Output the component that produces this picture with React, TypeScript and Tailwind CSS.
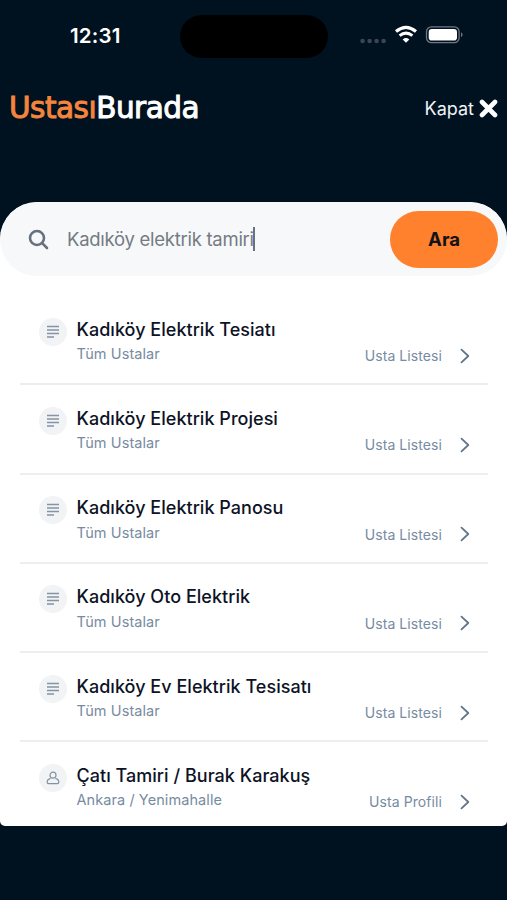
type Result = {
  title: string;
  subtitle: string;
  label: string;
  kind: "list" | "profile";
};

const results: Result[] = [
  { title: "Kadıköy Elektrik Tesiatı", subtitle: "Tüm Ustalar", label: "Usta Listesi", kind: "list" },
  { title: "Kadıköy Elektrik Projesi", subtitle: "Tüm Ustalar", label: "Usta Listesi", kind: "list" },
  { title: "Kadıköy Elektrik Panosu", subtitle: "Tüm Ustalar", label: "Usta Listesi", kind: "list" },
  { title: "Kadıköy Oto Elektrik", subtitle: "Tüm Ustalar", label: "Usta Listesi", kind: "list" },
  { title: "Kadıköy Ev Elektrik Tesisatı", subtitle: "Tüm Ustalar", label: "Usta Listesi", kind: "list" },
  { title: "Çatı Tamiri / Burak Karakuş", subtitle: "Ankara / Yenimahalle", label: "Usta Profili", kind: "profile" },
];

export default function App() {
  return (
    <div className="flex h-[900px] w-[507px] flex-col overflow-hidden bg-[#001120] font-['Inter',sans-serif]">
      <StatusBar />
      <Header />
      <main className="mt-[67px] flex h-[624px] flex-col overflow-hidden rounded-t-[37px] rounded-b-[5px] bg-white">
        <SearchBar />
        <ul className="mt-5 pr-[19px] pl-5">
          {results.map((result) => (
            <ResultRow key={result.title} result={result} />
          ))}
        </ul>
      </main>
    </div>
  );
}

function StatusBar() {
  return (
    <div className="flex h-[72px] shrink-0 items-center">
      <span className="ml-[70px] w-[110px] text-[20.5px] font-semibold tracking-[0.2px] text-white">12:31</span>
      <div className="h-[43px] w-[148px] rounded-full bg-black" />
      <svg className="ml-8" width="104" height="24" viewBox="360 24 104 24" fill="none">
        <g fill="#3c4652">
          <circle cx="362.6" cy="41" r="2.3" />
          <circle cx="369.6" cy="41" r="2.3" />
          <circle cx="376.6" cy="41" r="2.3" />
          <circle cx="383.6" cy="41" r="2.3" />
        </g>
        {/* Wifi */}
        <path d="M396 31.4Q406 23.2 416 31.4" stroke="#fff" strokeWidth="3.2" />
        <path d="M399.6 35.7Q406 30.5 412.4 35.7" stroke="#fff" strokeWidth="3" />
        <path d="M402.7 39.4Q406 36.6 409.3 39.4L406 42.8Z" fill="#fff" />
        {/* Battery */}
        <rect x="426.5" y="26.9" width="32.6" height="15.8" rx="4.8" stroke="#6f7882" strokeWidth="1.3" />
        <rect x="428.7" y="29" width="28.3" height="11.6" rx="3.1" fill="#fff" />
        <path d="M461 32.2q3.2 2.5 0 5Z" fill="#6f7882" />
      </svg>
    </div>
  );
}

function Header() {
  return (
    <header className="flex h-[63px] shrink-0 items-center justify-between pt-[9px] pr-[9px] pl-[9px]">
      <div className="mt-0.5 font-['DejaVu_Sans',sans-serif] text-[29.5px] leading-none tracking-[-0.5px] text-white [-webkit-text-stroke:1px]">
        <span className="text-[#f5843c]">Ustası</span>Burada
      </div>
      <button className="flex items-center gap-[5px] text-lg text-[#f1f3f5]">
        <span className="mt-0.5">Kapat</span>
        <svg width="19" height="19" viewBox="0 0 19 19" stroke="#fff" strokeWidth="4.6" strokeLinecap="round">
          <path d="M3 3l13 13M16 3L3 16" />
        </svg>
      </button>
    </header>
  );
}

function SearchBar() {
  return (
    <div className="flex h-[74px] shrink-0 items-center rounded-full bg-[#f6f8fa] pr-[9px] pl-7">
      <svg className="mt-0.5" width="22" height="22" viewBox="0 0 22 22" fill="none" stroke="#66717d" strokeWidth="2.6" strokeLinecap="round">
        <circle cx="9" cy="9" r="7" />
        <path d="M14.2 14.2L19 19" />
      </svg>
      <span className="mt-0.5 ml-[17px] text-[18.5px] tracking-[-0.27px] whitespace-nowrap text-[#757b82]">Kadıköy elektrik tamiri</span>
      <span className="-ml-px h-6 w-0.5 bg-[#68727e]" />
      <button className="ml-auto h-[57px] w-[108px] rounded-full bg-[#ff802d] pt-0.5 text-[18.5px] font-bold text-[#101318]">Ara</button>
    </div>
  );
}

function ResultRow({ result }: { result: Result }) {
  return (
    <li className="flex h-[89.25px] border-b-2 border-[#eceef0] pt-[21.5px] pl-[19px] last:border-b-0">
      <div className="flex size-7 items-center justify-center rounded-full bg-[#f1f3f5]">
        {result.kind === "list" ? <LinesIcon /> : <PersonIcon />}
      </div>
      <div className="ml-[9.5px] whitespace-nowrap">
        <div className="text-lg leading-6 font-medium tracking-[0.03px] text-[#0d1326]">{result.title}</div>
        <div className="mt-[0.5px] text-[14.5px] leading-6 tracking-[0.08px] text-[#778ba2]">{result.subtitle}</div>
      </div>
      <div className="mt-[26px] mr-[18px] ml-auto flex h-6 items-center gap-[18px] text-[14px] tracking-[0.08px] whitespace-nowrap text-[#778ba2]">
        {result.label}
        <svg width="10" height="16" viewBox="0 0 10 16" fill="none" stroke="#617589" strokeWidth="1.8" strokeLinecap="round" strokeLinejoin="round">
          <path d="M1.5 1.7L8.3 8L1.5 14.3" />
        </svg>
      </div>
    </li>
  );
}

function LinesIcon() {
  return (
    <svg width="14" height="14" viewBox="0 0 14 14" stroke="#8494a5" strokeWidth="1.5">
      <path d="M1 1.5h12M1 5h12M1 8.5h12M1 12h7" />
    </svg>
  );
}

function PersonIcon() {
  return (
    <svg width="14" height="14" viewBox="0 0 14 14" fill="none" stroke="#8292a3" strokeWidth="1.2" strokeLinejoin="round">
      <circle cx="7" cy="4.2" r="3" />
      <path d="M4.6 7.4C2.4 8 1.2 9.4 1.2 11.2Q1.2 12.6 2.6 12.6H11.4Q12.8 12.6 12.8 11.2C12.8 9.4 11.6 8 9.4 7.4" />
    </svg>
  );
}
